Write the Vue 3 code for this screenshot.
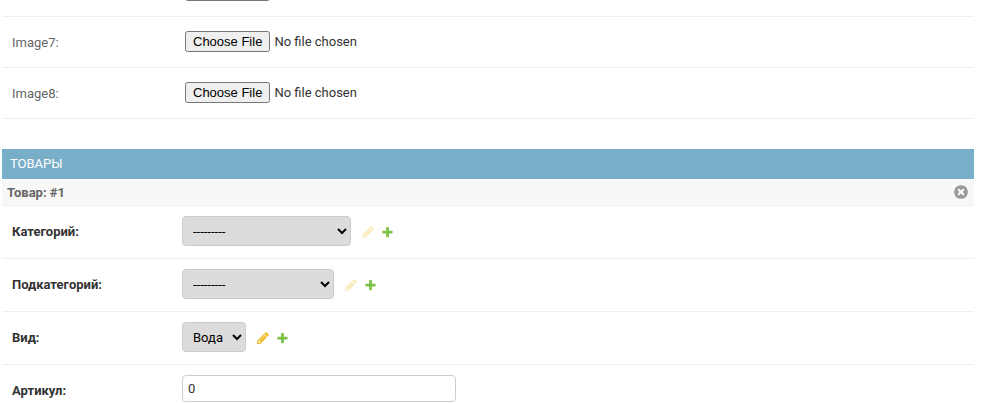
<template>
  <div class="page">
    <div class="row cut">
      <input class="file" type="file" />
    </div>
    <div v-for="name in images" :key="name" class="row file-row">
      <label class="label">{{ name }}:</label>
      <input class="file" type="file" />
    </div>

    <section class="group">
      <h2 class="group-title">Товары</h2>
      <h3 class="inline-title">
        <span>Товар: #1</span>
        <svg class="remove" width="16" height="16" viewBox="0 0 1792 1792">
          <path
            fill="#999"
            d="M1277 1122q0-26-19-45l-181-181 181-181q19-19 19-45 0-27-19-46l-90-90q-19-19-46-19-26 0-45 19l-181 181-181-181q-19-19-45-19-27 0-46 19l-90 90q-19 19-19 46 0 26 19 45l181 181-181 181q-19 19-19 45 0 27 19 46l90 90q19 19 46 19 26 0 45-19l181-181 181 181q19 19 45 19 27 0 46-19l90-90q19-19 19-46zm387-226q0 209-103 385.5t-279.5 279.5-385.5 103-385.5-103-279.5-279.5-103-385.5 103-385.5 279.5-279.5 385.5-103 385.5 103 279.5 279.5 103 385.5z"
          />
        </svg>
      </h3>

      <div v-for="field in selects" :key="field.label" class="row field-row">
        <label class="label required">{{ field.label }}:</label>
        <select class="select" :style="{ width: field.width + 'px' }">
          <option>{{ field.value }}</option>
        </select>
        <svg class="pencil" :class="{ faded: field.faded }" width="14" height="14" viewBox="0 0 1792 1792">
          <path
            fill="#efbe2e"
            d="M491 1536l91-91-235-235-91 91v107h128v128h107zm523-928q0-22-22-22-10 0-17 7l-542 542q-7 7-7 17 0 22 22 22 10 0 17-7l542-542q7-7 7-17zm-54-192l416 416-832 832h-416v-416zm683 96q0 53-37 90l-166 166-416-416 166-165q36-38 90-38 53 0 91 38l235 234q37 39 37 91z"
          />
        </svg>
        <svg class="plus" width="13" height="13" viewBox="0 0 1792 1792">
          <path
            fill="#7cc247"
            d="M1600 736v192q0 40-28 68t-68 28h-416v416q0 40-28 68t-68 28h-192q-40 0-68-28t-28-68v-416h-416q-40 0-68-28t-28-68v-192q0-40 28-68t68-28h416v-416q0-40 28-68t68-28h192q40 0 68 28t28 68v416h416q40 0 68 28t28 68z"
          />
        </svg>
      </div>

      <div class="row field-row last">
        <label class="label required">Артикул:</label>
        <input class="text" type="text" value="0" />
      </div>
    </section>
  </div>
</template>

<script setup>
const images = ['Image7', 'Image8']

const selects = [
  { label: 'Категорий', value: '---------', width: 169, faded: true },
  { label: 'Подкатегорий', value: '---------', width: 152, faded: true },
  { label: 'Вид', value: 'Вода', width: 64, faded: false },
]
</script>

<style>
html,
body {
  margin: 0;
  overflow: hidden;
  background: #fff;
}
</style>

<style scoped>
.page {
  width: 972px;
  margin-left: 2px;
  font-family: Roboto, 'Liberation Sans', sans-serif;
  font-size: 13px;
  color: #333;
}

.row {
  display: flex;
  align-items: center;
  box-sizing: border-box;
  border-bottom: 1px solid #eee;
}

.cut {
  height: 17px;
  padding-left: 183px;
  overflow: hidden;
  align-items: flex-start;
}

.cut .file {
  margin-top: -20px;
}

.file-row {
  height: 51px;
  padding-left: 10px;
}

.label {
  width: 170px;
  flex-shrink: 0;
  color: #666;
}

.file-row .file {
  margin-left: 3px;
  margin-top: -2px;
}

.file {
  font-family: Roboto, 'Liberation Sans', sans-serif;
  font-size: 13px;
  color: #333;
}

.group {
  margin-top: 30px;
}

.group-title {
  margin: 0;
  height: 30px;
  line-height: 30px;
  padding-left: 8px;
  background: #79aec8;
  color: #fff;
  font-size: 13px;
  font-weight: 400;
  text-transform: uppercase;
}

.inline-title {
  display: flex;
  align-items: center;
  justify-content: space-between;
  box-sizing: border-box;
  margin: 0;
  height: 27px;
  padding: 0 5px;
  background: #f8f8f8;
  border-bottom: 1px solid #eee;
  color: #666;
  font-size: 13px;
  font-weight: 700;
}

.field-row {
  height: 53px;
  padding: 0 0 2px 10px;
}

.field-row.last {
  padding-bottom: 6px;
  border-bottom: 0;
}

.field-row.last .label {
  padding-top: 3px;
}

.required {
  color: #333;
  font-weight: 700;
}

.select {
  box-sizing: border-box;
  height: 30px;
  padding: 6px 4px 6px 6px;
  background: #dcdcdc;
  border: 1px solid #ccc;
  border-radius: 4px;
  color: #000;
  font-family: inherit;
  font-size: 13px;
}

.pencil {
  margin: 2px 0 0 10px;
}

.pencil.faded {
  opacity: 0.3;
}

.plus {
  margin: 3px 0 0 6px;
}

.text {
  box-sizing: border-box;
  width: 274px;
  height: 27px;
  padding: 2px 5px;
  border: 1px solid #ccc;
  border-radius: 4px;
  color: #333;
  font-family: inherit;
  font-size: 13px;
}
</style>
